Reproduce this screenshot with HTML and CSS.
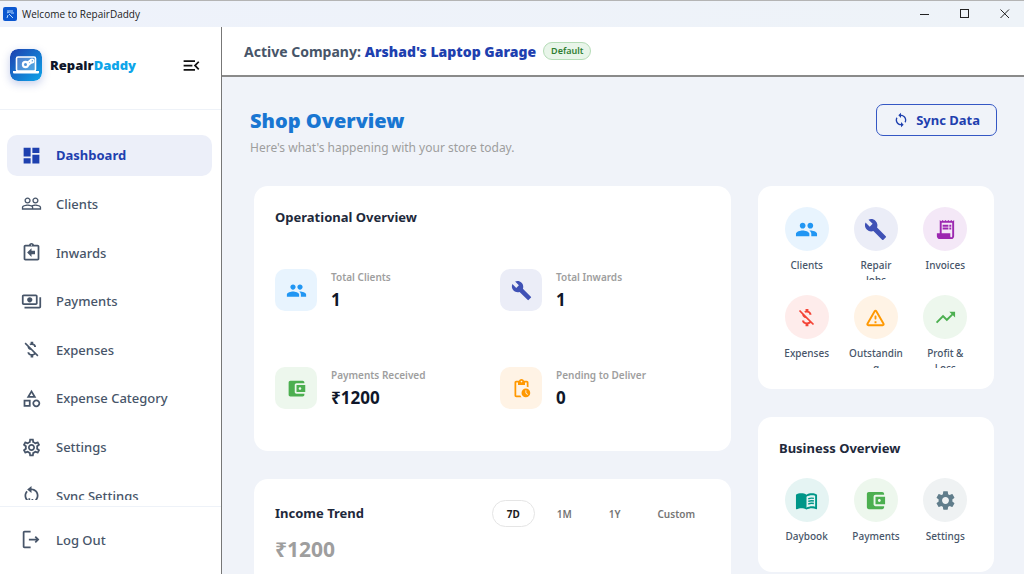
FILE: index.html
```html
<!doctype html>
<html lang="en">

<head>
  <meta charset="utf-8">
  <meta name="viewport" content="width=device-width, initial-scale=1">
  <title>Welcome to RepairDaddy</title>
  <link rel="stylesheet" href="styles.css">
</head>

<body>
  <!-- shared icons -->
  <svg class="sprite" aria-hidden="true">
    <symbol id="i-people" viewBox="0 0 24 24"><path d="M16 11c1.66 0 2.99-1.34 2.99-3S17.66 5 16 5c-1.66 0-3 1.34-3 3s1.34 3 3 3zm-8 0c1.66 0 2.99-1.34 2.99-3S9.66 5 8 5C6.34 5 5 6.34 5 8s1.34 3 3 3zm0 2c-2.33 0-7 1.17-7 3.5V19h14v-2.5c0-2.33-4.67-3.5-7-3.5zm8 0c-.29 0-.62.02-.97.05 1.16.84 1.97 1.97 1.97 3.45V19h6v-2.5c0-2.33-4.67-3.5-7-3.5z"/></symbol>
    <symbol id="i-build" viewBox="0 0 24 24"><path d="M22.7 19l-9.1-9.1c.9-2.3.4-5-1.5-6.9-2-2-5-2.4-7.4-1.3L9 6 6 9 1.6 4.7C.4 7.1.9 10.1 2.9 12.1c1.9 1.9 4.6 2.4 6.9 1.5l9.1 9.1c.4.4 1 .4 1.4 0l2.3-2.3c.5-.4.5-1.1.1-1.4z"/></symbol>
    <symbol id="i-wallet" viewBox="0 0 24 24"><path d="M21 18v1c0 1.1-.9 2-2 2H5c-1.11 0-2-.9-2-2V5c0-1.1.89-2 2-2h14c1.1 0 2 .9 2 2v1h-9c-1.11 0-2 .9-2 2v8c0 1.1.89 2 2 2h9zm-9-2h10V8H12v8zm4-2.5c-.83 0-1.5-.67-1.5-1.5s.67-1.5 1.5-1.5 1.5.67 1.5 1.5-.67 1.5-1.5 1.5z"/></symbol>
    <symbol id="i-moneyoff" viewBox="0 0 24 24"><path d="M12.5 6.9c1.78 0 2.44.85 2.5 2.1h2.21c-.07-1.72-1.12-3.3-3.21-3.81V3h-3v2.16c-.53.12-1.03.3-1.48.54l1.47 1.47c.41-.17.91-.27 1.51-.27zM5.33 4.06L4.06 5.33 7.5 8.77c0 2.08 1.56 3.21 3.91 3.91l3.51 3.51c-.34.48-1.05.91-2.42.91-2.06 0-2.87-.92-2.98-2.1h-2.2c.12 2.19 1.76 3.42 3.68 3.83V21h3v-2.15c.96-.18 1.82-.55 2.45-1.12l2.22 2.22 1.27-1.27L5.33 4.06z"/></symbol>
  </svg>

  <div class="titlebar">
    <svg class="app-icon" viewBox="0 0 14 14"><rect width="14" height="14" rx="2" fill="#0b57d0"/><path d="M4 4h2M8 4h2M4 6l2-1M8 6h3M6 7l4 4M5 8l-1 3M7 3v3" stroke="#b9dcff" fill="none"/></svg>
    <span class="window-title">Welcome to RepairDaddy</span>
    <button class="win-btn" aria-label="Minimize"><svg viewBox="0 0 10 10"><path d="M0 5.5h9"/></svg></button>
    <button class="win-btn" aria-label="Maximize"><svg viewBox="0 0 10 10"><rect x=".5" y=".5" width="8" height="8"/></svg></button>
    <button class="win-btn" aria-label="Close"><svg viewBox="0 0 10 10"><path d="M.5.5l8.500 8.500M9 .5L.5 9"/></svg></button>
  </div>

  <div class="app">
    <aside class="sidebar">
      <div class="brand">
        <svg class="logo" viewBox="0 0 32 32">
          <defs>
            <linearGradient id="lg" x1="0" y1="0" x2="1" y2="1">
              <stop offset="0" stop-color="#1e40af"/>
              <stop offset="1" stop-color="#0ea5e9"/>
            </linearGradient>
          </defs>
          <rect width="32" height="32" rx="8" fill="url(#lg)"/>
          <rect x="6.500" y="8" width="19" height="14" rx="1.500" fill="#fff" fill-opacity=".25" stroke="#fff" stroke-width="1.600"/>
          <path d="M3 22h26v1.500q0 1-1 1H4q-1 0-1-1z" fill="#fff"/>
          <circle cx="15.500" cy="15.500" r="2.600" fill="none" stroke="#fff" stroke-width="2.200"/>
          <path d="M17.500 13.500l4-3M18.500 16l4-3.500" stroke="#fff" stroke-width="1.800" fill="none"/>
          <circle cx="22" cy="12" r="1.800" fill="none" stroke="#fff" stroke-width="1.400"/>
        </svg>
        <span class="brand-name">Repair<b>Daddy</b></span>
        <button class="menu-btn" aria-label="Collapse menu"><svg class="icon" viewBox="0 0 24 24"><path d="M3 18h13v-2H3v2zM3 13h10v-2H3v2zm0-7v2h13V6H3zm18 9.590L17.420 12 21 8.410 19.590 7l-5 5 5 5L21 15.590z"/></svg></button>
      </div>

      <nav class="nav">
        <div class="nav-list">
          <a class="active" href="#"><svg class="icon" viewBox="0 0 24 24"><path d="M3 13h8V3H3v10zm0 8h8v-6H3v6zm10 0h8V11h-8v10zm0-18v6h8V3h-8z"/></svg>Dashboard</a>
          <a href="#"><svg class="icon" viewBox="0 0 24 24"><path d="M16.500 13c-1.200 0-3.070.34-4.500 1-1.430-.67-3.300-1-4.500-1C5.330 13 1 14.080 1 16.250V19h22v-2.750c0-2.170-4.330-3.250-6.500-3.250zm-4 4.500h-10v-1.250c0-.54 2.560-1.750 5-1.750s5 1.210 5 1.750v1.250zm9 0H14v-1.250c0-.46-.2-.86-.52-1.220.88-.3 1.960-.53 3.020-.53 2.440 0 5 1.210 5 1.750v1.250zM7.500 12c1.930 0 3.500-1.570 3.500-3.500S9.430 5 7.500 5 4 6.570 4 8.500 5.570 12 7.500 12zm0-5.500c1.100 0 2 .9 2 2s-.9 2-2 2-2-.9-2-2 .9-2 2-2zm9 5.500c1.930 0 3.500-1.570 3.500-3.500S18.430 5 16.500 5 13 6.570 13 8.500s1.570 3.500 3.500 3.500zm0-5.500c1.100 0 2 .9 2 2s-.9 2-2 2-2-.9-2-2 .9-2 2-2z"/></svg>Clients</a>
          <a href="#"><svg class="icon" viewBox="0 0 24 24"><path d="M16 10h-4V7l-5 5 5 5v-3h4v-4z"/><path d="M19 3h-4.180C14.400 1.840 13.300 1 12 1s-2.400.84-2.820 2H5c-1.100 0-2 .9-2 2v14c0 1.100.9 2 2 2h14c1.100 0 2-.9 2-2V5c0-1.100-.9-2-2-2zm-7-.25c.41 0 .75.34.75.75s-.34.75-.75.75-.75-.34-.75-.75.34-.75.75-.75zM19 19H5V5h14v14z"/></svg>Inwards</a>
          <a href="#"><svg class="icon" viewBox="0 0 24 24"><path d="M19 14V6c0-1.100-.9-2-2-2H3c-1.100 0-2 .9-2 2v8c0 1.100.9 2 2 2h14c1.100 0 2-.9 2-2zm-2 0H3V6h14v8zm-7-7c-1.660 0-3 1.340-3 3s1.340 3 3 3 3-1.340 3-3-1.340-3-3-3zm13 0v11c0 1.100-.9 2-2 2H4v-2h17V7h2z"/></svg>Payments</a>
          <a href="#"><svg class="icon"><use href="#i-moneyoff"/></svg>Expenses</a>
          <a href="#"><svg class="icon" viewBox="0 0 24 24"><path fill-rule="evenodd" d="M12 2l-5.500 9h11L12 2zm0 3.840L13.930 9h-3.870L12 5.840zM17.500 13c-2.490 0-4.500 2.010-4.500 4.500s2.010 4.500 4.500 4.500 4.500-2.010 4.500-4.500-2.010-4.500-4.500-4.500zm0 7c-1.380 0-2.500-1.120-2.500-2.500s1.120-2.500 2.500-2.500 2.500 1.120 2.500 2.500-1.120 2.500-2.500 2.500zM3 21.500h8v-8H3v8zm2-6h4v4H5v-4z"/></svg>Expense Category</a>
          <a href="#"><svg class="icon" viewBox="0 0 24 24"><path d="M19.430 12.980c.04-.32.07-.64.07-.98 0-.34-.03-.66-.07-.98l2.110-1.650c.19-.15.24-.42.12-.64l-2-3.460c-.09-.16-.26-.25-.44-.25-.06 0-.12.01-.17.03l-2.490 1c-.52-.4-1.080-.73-1.690-.98l-.38-2.650C14.460 2.180 14.250 2 14 2h-4c-.25 0-.46.18-.49.42l-.38 2.650c-.61.25-1.170.59-1.690.98l-2.490-1c-.06-.02-.12-.03-.18-.03-.17 0-.34.09-.43.25l-2 3.460c-.13.22-.07.49.12.64l2.110 1.650c-.04.32-.07.65-.07.98 0 .33.03.66.07.98l-2.110 1.650c-.19.15-.24.42-.12.64l2 3.460c.09.16.26.25.44.25.06 0 .12-.01.17-.03l2.490-1c.52.4 1.080.73 1.690.98l.38 2.650c.03.24.24.42.49.42h4c.25 0 .46-.18.49-.42l.38-2.650c.61-.25 1.170-.59 1.690-.98l2.490 1c.06.02.12.03.18.03.17 0 .34-.09.43-.25l2-3.460c.12-.22.07-.49-.12-.64l-2.110-1.650zm-1.980-1.710c.04.31.05.52.05.73 0 .21-.02.43-.05.73l-.14 1.130.89.7 1.080.84-.7 1.210-1.270-.51-1.040-.42-.9.68c-.43.32-.84.56-1.250.73l-1.060.43-.16 1.130-.2 1.350h-1.400l-.19-1.350-.16-1.130-1.060-.43c-.43-.18-.83-.41-1.230-.71l-.91-.7-1.060.43-1.270.51-.7-1.210 1.080-.84.89-.7-.14-1.130c-.03-.31-.05-.54-.05-.74s.02-.43.05-.73l.14-1.130-.89-.7-1.080-.84.7-1.210 1.270.51 1.040.42.9-.68c.43-.32.84-.56 1.250-.73l1.060-.43.16-1.130.2-1.350h1.390l.19 1.350.16 1.130 1.060.43c.43.18.83.41 1.230.71l.91.7 1.060-.43 1.270-.51.7 1.210-1.070.85-.89.7.14 1.130zM12 8c-2.210 0-4 1.790-4 4s1.790 4 4 4 4-1.790 4-4-1.790-4-4-4zm0 6c-1.100 0-2-.9-2-2s.9-2 2-2 2 .9 2 2-.9 2-2 2z"/></svg>Settings</a>
          <a href="#"><svg class="icon" viewBox="0 0 24 24"><path d="M12 4V1L7 5l5 4V6c3.310 0 6 2.690 6 6 0 2-.8 3.600-2 4.800l1.400 1.400C19 16.700 20 14.500 20 12c0-4.420-3.580-8-8-8zM6.300 6.500C4.900 7.900 4 9.900 4 12c0 2.500 1 4.700 2.600 6.200L8 16.800C6.800 15.600 6 14 6 12c0-1.600.6-3 1.700-4.100zM8.500 15h2v2h-2zM12 16h2v2h-2z"/></svg>Sync Settings</a>
        </div>
      </nav>

      <div class="logout">
        <a href="#"><svg class="icon" viewBox="0 0 24 24"><path d="M17 8l-1.410 1.410L17.170 11H9v2h8.170l-1.580 1.580L17 16l4-4-4-4zM4 4h7V2H4c-1.100 0-2 .9-2 2v16c0 1.100.9 2 2 2h7v-2H4V4z"/></svg>Log Out</a>
      </div>
    </aside>

    <main class="main">
      <header class="company">
        <span>Active Company:</span>
        <strong>Arshad's Laptop Garage</strong>
        <span class="badge">Default</span>
      </header>

      <div class="content">
        <div class="page-head">
          <div>
            <h1>Shop Overview</h1>
            <p>Here's what's happening with your store today.</p>
          </div>
          <button class="sync-btn"><svg class="icon" viewBox="0 0 24 24"><path d="M12 4V1L8 5l4 4V6c3.310 0 6 2.690 6 6 0 1.010-.25 1.970-.7 2.800l1.460 1.460C19.540 15.030 20 13.570 20 12c0-4.420-3.580-8-8-8zm0 14c-3.310 0-6-2.690-6-6 0-1.010.25-1.970.7-2.800L5.240 7.740C4.460 8.970 4 10.430 4 12c0 4.420 3.580 8 8 8v3l4-4-4-4v3z"/></svg>Sync Data</button>
        </div>

        <div class="columns">
          <div class="col-left">
            <section class="card operational">
              <h2>Operational Overview</h2>
              <div class="stats">
                <div class="stat">
                  <span class="tile blue"><svg class="icon"><use href="#i-people"/></svg></span>
                  <div><p>Total Clients</p><b>1</b></div>
                </div>
                <div class="stat">
                  <span class="tile indigo"><svg class="icon"><use href="#i-build"/></svg></span>
                  <div><p>Total Inwards</p><b>1</b></div>
                </div>
                <div class="stat">
                  <span class="tile green"><svg class="icon"><use href="#i-wallet"/></svg></span>
                  <div><p>Payments Received</p><b>₹1200</b></div>
                </div>
                <div class="stat">
                  <span class="tile orange"><svg class="icon" viewBox="0 0 24 24"><path d="M17 12c-2.760 0-5 2.240-5 5s2.240 5 5 5 5-2.240 5-5-2.240-5-5-5zm1.650 7.350L16.500 17.200V14h1v2.790l1.850 1.850-.7.71zM18 3h-3.180C14.400 1.840 13.300 1 12 1s-2.400.84-2.820 2H6c-1.100 0-2 .9-2 2v15c0 1.100.9 2 2 2h6.110c-.59-.57-1.070-1.250-1.420-2H6V5h2v3h8V5h2v5.080c.71.1 1.380.31 2 .6V5c0-1.100-.9-2-2-2zm-6 2c-.55 0-1-.45-1-1s.45-1 1-1 1 .45 1 1-.45 1-1 1z"/></svg></span>
                  <div><p>Pending to Deliver</p><b>0</b></div>
                </div>
              </div>
            </section>

            <section class="card income">
              <div class="income-head">
                <h2>Income Trend</h2>
                <div class="ranges">
                  <button class="selected">7D</button>
                  <button>1M</button>
                  <button>1Y</button>
                  <button>Custom</button>
                </div>
              </div>
              <p class="total">₹1200</p>
            </section>
          </div>

          <div class="col-right">
            <section class="card shortcuts">
              <div class="links">
                <a href="#"><span class="dot blue"><svg class="icon"><use href="#i-people"/></svg></span><span class="label">Clients</span></a>
                <a href="#"><span class="dot indigo"><svg class="icon"><use href="#i-build"/></svg></span><span class="label">Repair<br>Jobs</span></a>
                <a href="#"><span class="dot purple"><svg class="icon" viewBox="0 0 24 24"><path fill-rule="evenodd" d="M19.500 3.500L18 2l-1.500 1.500L15 2l-1.500 1.500L12 2l-1.500 1.500L9 2 7.500 3.500 6 2v14H3v3c0 1.660 1.340 3 3 3h12c1.660 0 3-1.340 3-3V2l-1.500 1.500zM19 19c0 .55-.45 1-1 1s-1-.45-1-1v-3H8V5h11v14z"/><path d="M9 7h6v2H9zM16 7h2v2h-2zM9 10h6v2H9zM16 10h2v2h-2z"/></svg></span><span class="label">Invoices</span></a>
                <a href="#"><span class="dot red"><svg class="icon"><use href="#i-moneyoff"/></svg></span><span class="label">Expenses</span></a>
                <a href="#"><span class="dot orange"><svg class="icon" viewBox="0 0 24 24"><path fill-rule="evenodd" d="M12 5.990L19.530 19H4.470L12 5.990M2.740 18c-.77 1.330.19 3 1.730 3h15.060c1.540 0 2.500-1.670 1.730-3L13.730 4.990c-.77-1.330-2.690-1.330-3.460 0L2.740 18zM11 11v2c0 .55.45 1 1 1s1-.45 1-1v-2c0-.55-.45-1-1-1s-1 .45-1 1zm0 5h2v2h-2z"/></svg></span><span class="label">Outstanding</span></a>
                <a href="#"><span class="dot green"><svg class="icon" viewBox="0 0 24 24"><path d="M16 6l2.290 2.290-4.880 4.880-4-4L2 16.590 3.410 18l6-6 4 4 6.300-6.290L22 12V6z"/></svg></span><span class="label">Profit &amp;<br>Loss</span></a>
              </div>
            </section>

            <section class="card business">
              <h2>Business Overview</h2>
              <div class="links">
                <a href="#"><span class="dot teal"><svg class="icon" viewBox="0 0 24 24"><path fill-rule="evenodd" d="M21 5c-1.110-.35-2.330-.5-3.500-.5-1.950 0-4.050.4-5.500 1.500-1.450-1.100-3.550-1.500-5.500-1.500S2.450 4.900 1 6v14.650c0 .25.25.5.5.5.1 0 .15-.05.25-.05C3.100 20.450 5.050 20 6.500 20c1.950 0 4.050.4 5.500 1.500 1.350-.85 3.800-1.500 5.500-1.500 1.650 0 3.350.3 4.750 1.050.1.05.15.05.25.05.25 0 .5-.25.5-.5V6c-.6-.45-1.250-.75-2-1zm0 13.500c-1.100-.35-2.300-.5-3.500-.5-1.700 0-4.150.65-5.500 1.500V8c1.350-.85 3.800-1.500 5.500-1.500 1.200 0 2.400.15 3.500.5v11.500z"/><path d="M13.800 10.300c1.700-.8 3.900-1 5.900-.5M13.800 13c1.700-.8 3.900-1 5.900-.5M13.800 15.700c1.700-.8 3.900-1 5.900-.5" fill="none" stroke="currentColor" stroke-width="1.500"/></svg></span><span class="label">Daybook</span></a>
                <a href="#"><span class="dot green"><svg class="icon"><use href="#i-wallet"/></svg></span><span class="label">Payments</span></a>
                <a href="#"><span class="dot gray"><svg class="icon" viewBox="0 0 24 24"><path d="M19.140 12.940c.04-.3.06-.61.06-.94 0-.32-.02-.64-.07-.94l2.030-1.580c.18-.14.23-.41.12-.61l-1.920-3.320c-.12-.22-.37-.29-.59-.22l-2.390.96c-.5-.38-1.030-.7-1.620-.94l-.36-2.540c-.04-.24-.24-.41-.48-.41h-3.840c-.24 0-.43.17-.47.41l-.36 2.540c-.59.24-1.130.57-1.620.94l-2.390-.96c-.22-.08-.47 0-.59.22L2.740 8.870c-.12.21-.08.47.12.61l2.030 1.580c-.05.3-.09.63-.09.94s.02.64.07.94l-2.030 1.580c-.18.14-.23.41-.12.61l1.920 3.320c.12.22.37.29.59.22l2.390-.96c.5.38 1.030.7 1.620.94l.36 2.540c.05.24.24.41.48.41h3.840c.24 0 .44-.17.47-.41l.36-2.540c.59-.24 1.130-.56 1.620-.94l2.390.96c.22.08.47 0 .59-.22l1.920-3.320c.12-.22.07-.47-.12-.61l-2.010-1.580zM12 15.600c-1.980 0-3.600-1.620-3.600-3.600s1.620-3.600 3.600-3.600 3.600 1.620 3.600 3.600-1.620 3.600-3.600 3.600z"/></svg></span><span class="label">Settings</span></a>
              </div>
            </section>
          </div>
        </div>
      </div>
    </main>
  </div>
</body>

</html>
```
FILE: styles.css
```css
* {
  box-sizing: border-box;
  margin: 0;
  padding: 0;
}

body {
  display: flex;
  flex-direction: column;
  height: 100vh;
  overflow: hidden;
  background: #f0f3f9;
  color: #1e293b;
  font-family: "Noto Sans", "Open Sans", sans-serif;
  font-size: 13px;
}

a {
  color: inherit;
  text-decoration: none;
}

button {
  background: none;
  border: none;
  font-family: inherit;
}

.sprite {
  display: none;
}

.icon {
  display: block;
  flex: none;
  width: 21px;
  height: 21px;
  fill: currentColor;
}

/* window title bar */
.titlebar {
  display: flex;
  align-items: center;
  flex: none;
  height: 27px;
  padding: 0 4px 0 3px;
  border-top: 1px solid #b4b4b4;
  background: linear-gradient(90deg, #eef2fb, #eef3f8);
}

.app-icon {
  width: 14px;
  height: 14px;
  margin-right: 5px;
}

.window-title {
  flex: 1;
  color: #1b1b1b;
  font-family: "Open Sans", sans-serif;
  font-size: 10px;
}

.win-btn {
  display: flex;
  justify-content: center;
  width: 40px;
  padding: 0 10px 0 0;
}

.win-btn:last-child {
  width: 30px;
  padding: 0;
}

.win-btn svg {
  width: 10px;
  height: 10px;
  fill: none;
  stroke: #222;
}

.app {
  display: flex;
  flex: 1;
  min-height: 0;
}

/* sidebar */
.sidebar {
  display: flex;
  flex-direction: column;
  flex: none;
  width: 222px;
  background: #fff;
  border-right: 1px solid #777;
}

.brand {
  display: flex;
  align-items: center;
  flex: none;
  height: 83px;
  padding: 0 19px 6px 10px;
  border-bottom: 1px solid #eef2f8;
}

.logo {
  width: 32px;
  height: 32px;
  margin-right: 8px;
  border-radius: 8px;
  box-shadow: 0 3px 8px rgba(30, 64, 175, 0.25);
}

.brand-name {
  flex: 1;
  color: #0f172a;
  font-size: 13px;
  font-weight: 900;
}

.brand-name b {
  color: #0ea5e9;
  font-weight: 900;
}

.menu-btn {
  color: #111;
}

.nav {
  flex: 1;
  min-height: 0;
  margin-bottom: 6px;
  padding: 25px 9px 0 7px;
  overflow: hidden;
}

.nav-list {
  display: grid;
  grid-auto-rows: 1fr;
  gap: 8px;
  height: 381px;
}

.nav a,
.logout a {
  display: flex;
  align-items: center;
  gap: 14px;
  padding: 0 14px;
  border-radius: 10px;
  color: #475569;
  font-weight: 500;
}

.nav .active {
  background: #eceff9;
  color: #1e40af;
  font-weight: 700;
}

.logout {
  flex: none;
  padding: 12px 9px 14px 7px;
  border-top: 1px solid #eef2f8;
}

.logout a {
  height: 41px;
}

/* main area */
.main {
  display: flex;
  flex-direction: column;
  flex: 1;
  min-width: 0;
}

.company {
  display: flex;
  align-items: center;
  flex: none;
  gap: 4px;
  height: 50px;
  padding: 0 22px;
  background: #fff;
  border-bottom: 2px solid #8a8a8a;
  color: #475569;
  font-size: 14px;
  font-weight: 700;
}

.company strong {
  color: #1e40af;
  font-weight: 900;
}

.badge {
  margin-left: 3px;
  padding: 1px 7px;
  border: 1px solid #b5dcb7;
  border-radius: 9px;
  background: #e8f5e9;
  color: #2e7d32;
  font-size: 9px;
  font-weight: 600;
  line-height: 14px;
}

.content {
  flex: 1;
  min-height: 0;
  padding: 27px 27px 0 28px;
  overflow: hidden;
}

.page-head {
  display: flex;
  align-items: flex-start;
  justify-content: space-between;
  margin-bottom: 28px;
}

.page-head h1 {
  color: #1976d2;
  font-size: 20px;
  font-weight: 900;
  line-height: 33px;
}

.page-head p {
  color: #9e9e9e;
  font-size: 12px;
  line-height: 21px;
}

.sync-btn {
  display: flex;
  align-items: center;
  gap: 7px;
  height: 32px;
  padding: 0 16px;
  border: 1px solid #3457c4;
  border-radius: 7px;
  color: #1e40af;
  font-size: 13px;
  font-weight: 700;
}

.sync-btn .icon {
  width: 16px;
  height: 16px;
}

.columns {
  display: flex;
  gap: 27px;
  padding: 0 3px 0 4px;
}

.col-left {
  flex: 1;
}

.col-right {
  flex: none;
  width: 236px;
}

.card {
  margin-bottom: 28px;
  padding: 21px;
  background: #fff;
  border-radius: 14px;
}

.card h2 {
  font-size: 13px;
  font-weight: 700;
  line-height: 21px;
}

.stats {
  display: grid;
  grid-template-columns: 1fr 1fr;
  gap: 52px 15px;
  padding: 41px 0 17px;
}

.stat {
  display: flex;
  gap: 14px;
}

.stat p {
  color: #9e9e9e;
  font-size: 10px;
  font-weight: 600;
  line-height: 16px;
}

.stat b {
  display: block;
  color: #0f172a;
  font-size: 17px;
  line-height: 30px;
}

.tile,
.dot {
  display: flex;
  align-items: center;
  justify-content: center;
  flex: none;
  width: 42px;
  height: 42px;
  border-radius: 10px;
}

.dot {
  width: 44px;
  height: 44px;
  border-radius: 50%;
}

.dot .icon {
  width: 23px;
  height: 23px;
}

.blue { background: #e8f4fe; color: #2196f3; }
.indigo { background: #ebedf7; color: #3f51b5; }
.green { background: #edf7ed; color: #4caf50; }
.orange { background: #fff3e5; color: #ff9800; }
.purple { background: #f4e8f7; color: #9c27b0; }
.red { background: #feeceb; color: #f44336; }
.teal { background: #e5f4f3; color: #009688; }
.gray { background: #eff2f3; color: #607d8b; }

/* income card runs past the bottom edge */
.income {
  min-height: 260px;
}

.income-head {
  display: flex;
  align-items: center;
  justify-content: space-between;
}

.ranges {
  display: flex;
  gap: 7px;
}

.ranges button {
  height: 27px;
  padding: 0 14px;
  border: 1px solid transparent;
  border-radius: 14px;
  color: #757575;
  font-size: 10px;
  font-weight: 600;
}

.ranges .selected {
  border-color: #e5e5e5;
  color: #1e1e1e;
  font-weight: 700;
}

.total {
  color: #9e9e9e;
  font-size: 21px;
  font-weight: 700;
  line-height: 44px;
}

/* round shortcuts */
.links {
  display: grid;
  grid-template-columns: repeat(3, 1fr);
  gap: 15px 14px;
}

.links a {
  display: flex;
  flex-direction: column;
  align-items: center;
  height: 73px;
  overflow: hidden;
}

.label {
  width: 100%;
  margin-top: 7px;
  color: #475569;
  font-size: 10px;
  font-weight: 500;
  line-height: 15px;
  text-align: center;
  overflow-wrap: break-word;
}

.business .links {
  margin-top: 19px;
}
```
